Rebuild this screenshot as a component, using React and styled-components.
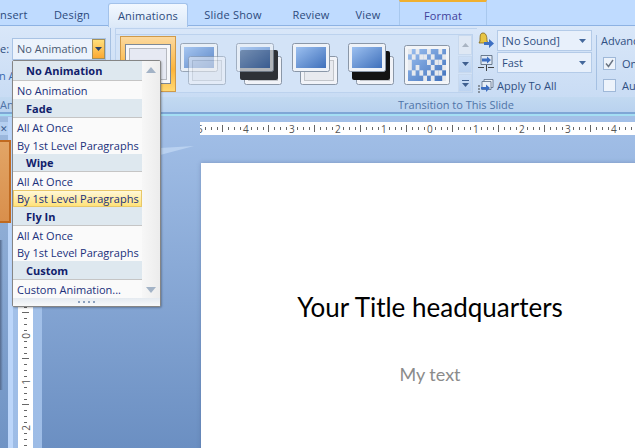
import React from "react";
import styled, { createGlobalStyle } from "styled-components";

const Global = createGlobalStyle`
  html, body { margin: 0; padding: 0; }
  body { width: 635px; height: 448px; overflow: hidden; font-family: "Open Sans", "Liberation Sans", sans-serif; }
  * { box-sizing: border-box; }
`;

const tabs = [
  { label: "nsert", w: 36, clip: true },
  { label: "Design", w: 72 },
  { label: "Animations", w: 80, active: true },
  { label: "Slide Show", w: 90 },
  { label: "Review", w: 66 },
  { label: "View", w: 48 },
  { label: "Format", w: 88, context: true },
];

// row heights read off the reference, they are not quite even
const menu = [
  { head: "No Animation", h: 20 },
  { item: "No Animation", h: 18 },
  { head: "Fade", h: 19 },
  { item: "All At Once", h: 18 },
  { item: "By 1st Level Paragraphs", h: 18 },
  { head: "Wipe", h: 18 },
  { item: "All At Once", h: 18 },
  { item: "By 1st Level Paragraphs", h: 17, hot: true },
  { head: "Fly In", h: 19 },
  { item: "All At Once", h: 18 },
  { item: "By 1st Level Paragraphs", h: 17 },
  { head: "Custom", h: 19 },
  { item: "Custom Animation...", h: 18 },
];

const hNums = ["5", "4", "3", "2", "1", "0", "1", "2", "3", "4"];
const vNums = ["1", "0", "1", "2"];

const checker = [
  [0, 0], [2, 0], [5, 0], [8, 0],
  [1, 1], [3, 1], [4, 1], [6, 1], [9, 1],
  [0, 2], [5, 2], [7, 2], [8, 2],
  [0, 3], [2, 3], [6, 3], [9, 3],
  [1, 4], [3, 4], [5, 4], [7, 4], [8, 4],
  [4, 5], [6, 5], [9, 5],
];

const Grad = () => (
  <defs>
    <linearGradient id="screen" x1="0" y1="0" x2="1" y2="1">
      <stop offset="0" stopColor="#9cc0f0" />
      <stop offset="1" stopColor="#3f70bb" />
    </linearGradient>
  </defs>
);

const Back = () => (
  <>
    <rect x="8.500" y="13.500" width="37" height="28" rx="2" fill="#f1f3f8" stroke="#8a97a8" />
    <rect x="12.500" y="17.500" width="29" height="20" fill="#e8eaef" stroke="#c2c5ca" />
  </>
);

const Front = ({ alpha = 1 }) => (
  <g opacity={alpha}>
    <rect x="0.500" y="0.500" width="37" height="28" rx="2" fill="#eef2f8" stroke="#8a97a8" />
    <rect x="4" y="4" width="30" height="21" fill="url(#screen)" />
  </g>
);

const Thumb = ({ kind }) => {
  if (kind === "checker") {
    return (
      <svg width="46" height="40" viewBox="0 0 46 40">
        <Grad />
        <rect x="0.500" y="0.500" width="45" height="39" rx="2" fill="#f3f5f8" stroke="#8a97a8" />
        <rect x="4" y="4" width="38" height="32" fill="url(#screen)" />
        {checker.map(([x, y]) => (
          <rect key={x + "-" + y} x={4 + x * 3.8} y={4 + y * 5.33} width="3.800" height="5.330" fill="#e6e9ee" />
        ))}
      </svg>
    );
  }
  return (
    <svg width="46" height="42" viewBox="0 0 46 42">
      <Grad />
      {kind === "fade" ? (
        <>
          <Front alpha={0.8} />
          <g opacity="0.55"><Back /></g>
        </>
      ) : (
        <>
          <Back />
          {kind === "dark" && <rect x="4" y="7" width="38" height="30" rx="2" fill="#2e3136" />}
          {kind === "black" && <rect x="4" y="8" width="38" height="29" rx="2" fill="#131313" />}
          <Front alpha={kind === "dark" ? 0.68 : 1} />
        </>
      )}
    </svg>
  );
};

const Ticks = ({ num, vertical }) => {
  const Slot = vertical ? VSlot : HSlot;
  return [0, 1, 2, 3, 4, 5, 6, 7].map((i) => (
    <Slot key={i}>
      {i === 0 ? (vertical ? <VNum>{num}</VNum> : num) : i === 4 ? <Tick $long $vertical={vertical} /> : <Tick $vertical={vertical} />}
    </Slot>
  ));
};

const Down = ({ fill = "#44689c" }) => (
  <svg width="7" height="4" viewBox="0 0 7 4"><path d="M0 0h7L3.500 4z" fill={fill} /></svg>
);

export default function App() {
  return (
    <Page>
      <Global />
      <TabBar>
        {tabs.map((t) => (
          <Tab key={t.label} $w={t.w} $active={t.active} $context={t.context} $clip={t.clip}>
            {t.label}
          </Tab>
        ))}
      </TabBar>

      <Ribbon>
        <LeftGroup>
          <LeftRow>
            <LabelText>e:</LabelText>
            <Combo>
              <ComboText>No Animation</ComboText>
              <ComboArrow><Down fill="#27426b" /></ComboArrow>
            </Combo>
          </LeftRow>
          <LeftNote>n A</LeftNote>
        </LeftGroup>

        <GalleryGroup>
          <Gallery>
            <ThumbRow>
              <SelectedThumb>
                <SelectedInner />
              </SelectedThumb>
              {["fade", "dark", "blue", "black", "checker"].map((k) => (
                <ThumbSlot key={k} $low={k === "checker"}>
                  <Thumb kind={k} />
                </ThumbSlot>
              ))}
            </ThumbRow>
            <ScrollCol>
              <ScrollBtn $h={20}><svg width="7" height="4" viewBox="0 0 7 4"><path d="M0 4h7L3.500 0z" fill="#a9b4c2" /></svg></ScrollBtn>
              <ScrollBtn $h={18} $blue><Down fill="#3f5f8f" /></ScrollBtn>
              <ScrollBtn $h={18} $blue><svg width="7" height="7" viewBox="0 0 7 7"><path d="M0 0h7v1H0zM0 3h7L3.500 7z" fill="#3f5f8f" /></svg></ScrollBtn>
            </ScrollCol>
          </Gallery>
        </GalleryGroup>

        <SoundCol>
          <SoundRow>
            <svg width="16" height="17" viewBox="0 0 16 17">
              <path d="M5 1c3 0 4 3 4 8l1 2H1l1-2c0-5 0-8 3-8z" fill="#e8c544" stroke="#7d6216" strokeWidth=".8" />
              <path d="M6 10h5V7l5 4.500L11 16v-3H6z" fill="#3d6fc2" />
            </svg>
            <Select>
              <span>[No Sound]</span>
              <Down />
            </Select>
          </SoundRow>
          <SoundRow>
            <svg width="16" height="16" viewBox="0 0 16 16">
              <path d="M3 .500h11v9H3z" fill="#dfe9f6" stroke="#4f5f75" strokeWidth=".8" />
              <path d="M4 3.500h5V1.500l4 3.500-4 3.500V6.500H4z" fill="#3d6fc2" />
              <path d="M0 12.500h6M10 12.500h6M8.500 10v6" stroke="#333" strokeWidth=".9" />
            </svg>
            <Select>
              <span>Fast</span>
              <Down />
            </Select>
          </SoundRow>
          <ApplyRow>
            <svg width="16" height="14" viewBox="0 0 16 14">
              <path d="M6 .500h9v8H6z" fill="#e8eff8" stroke="#5b6d85" strokeWidth=".8" />
              <path d="M4 2.500h9v8H4z" fill="#e8eff8" stroke="#5b6d85" strokeWidth=".8" />
              <path d="M3 8h5V5.500l4 3.500-4 4v-2.500H3z" fill="#3d6fc2" />
              <path d="M0 7h2M0 10h2M0 13h2" stroke="#333" strokeWidth=".9" />
            </svg>
            <span>Apply To All</span>
          </ApplyRow>
        </SoundCol>

        <Divider />

        <AdvanceCol>
          <AdvanceTitle>Advance</AdvanceTitle>
          <CheckRow>
            <CheckBox>
              <svg width="9" height="9" viewBox="0 0 9 9"><path d="M1 4.500l2.500 3L8 1" fill="none" stroke="#6a7482" strokeWidth="1.400" /></svg>
            </CheckBox>
            <span>On</span>
          </CheckRow>
          <CheckRow>
            <CheckBox />
            <span>Au</span>
          </CheckRow>
        </AdvanceCol>
      </Ribbon>

      <GroupBar>
        <GroupLabelLeft>Ani</GroupLabelLeft>
        <GroupLabel>Transition to This Slide</GroupLabel>
      </GroupBar>
      <RibbonEdge />

      <Workspace>
        <SidePanel>
          <SideTab>✕</SideTab>
          <SideThumb />
          <SideDark />
        </SidePanel>
        <SideGutter />
        <VRulerWrap>
          <VRuler>
            {vNums.map((n, i) => (
              <VRulerCell key={i}><Ticks num={n} vertical /></VRulerCell>
            ))}
          </VRuler>
        </VRulerWrap>
        <Canvas>
          <Wedge width="34" height="10" viewBox="0 0 34 10"><path d="M0 2L34 0 0 9z" fill="#b9d1f0" /></Wedge>
          <HRuler>
            <HRow>
              {hNums.map((n, i) => (
                <HCell key={i}><Ticks num={n} /></HCell>
              ))}
            </HRow>
          </HRuler>
          <Slide>
            <SlideTitle>Your Title headquarters</SlideTitle>
            <SlideText>My text</SlideText>
          </Slide>
        </Canvas>
      </Workspace>

      <Dropdown>
        <ListArea>
          <List>
            {menu.map((m, i) =>
              m.head ? (
                <MenuHead key={i} $h={m.h}>{m.head}</MenuHead>
              ) : (
                <MenuItem key={i} $h={m.h} $hot={m.hot}>{m.item}</MenuItem>
              )
            )}
          </List>
          <MenuScroll>
            <svg width="10" height="6" viewBox="0 0 10 6"><path d="M0 6h10L5 0z" fill="#a3b3c6" /></svg>
            <svg width="10" height="6" viewBox="0 0 10 6"><path d="M0 0h10L5 6z" fill="#a3b3c6" /></svg>
          </MenuScroll>
        </ListArea>
        <Grip>
          <GripDot /><GripDot /><GripDot /><GripDot />
        </Grip>
      </Dropdown>
    </Page>
  );
}

const Page = styled.div`
  position: relative;
  width: 635px;
  height: 448px;
  overflow: hidden;
  display: flex;
  flex-direction: column;
  background: #8aa9d4;
  font-size: 11px;
  color: #15428b;
`;

const TabBar = styled.div`
  height: 26px;
  flex: none;
  display: flex;
  background: #bfdbff;
  border-bottom: 1px solid #8db2e3;
`;

const Tab = styled.div`
  width: ${(p) => p.$w}px;
  flex: none;
  display: flex;
  align-items: center;
  justify-content: ${(p) => (p.$clip ? "flex-start" : "center")};
  padding-top: 4px;
  font-size: 11px;
  letter-spacing: 0.2px;
  color: #2c4a7c;
  ${(p) =>
    p.$active &&
    `
    margin-top: 3px;
    height: 24px;
    padding-top: 0;
    background: linear-gradient(#f2f8ff, #dce9f8);
    border: 1px solid #a3c2ea;
    border-bottom: none;
    border-radius: 3px 3px 0 0;
    z-index: 1;
  `}
  ${(p) =>
    p.$context &&
    `
    margin-left: 7px;
    border-top: 2px solid #f0b030;
    border-left: 1px solid #a8c8ee;
    border-right: 1px solid #a8c8ee;
    color: #3f3f9a;
  `}
`;

const Ribbon = styled.div`
  height: 71px;
  flex: none;
  display: flex;
  background: linear-gradient(#d9e7f9, #c9dcf4);
`;

const LeftGroup = styled.div`
  width: 111px;
  flex: none;
  padding-top: 10px;
  margin-top: 2px;
  border-right: 1px solid #a5c0e2;
  display: flex;
  flex-direction: column;
  gap: 8px;
  overflow: hidden;
`;

const LeftRow = styled.div`
  display: flex;
`;

const LeftNote = styled.div`
  color: #3a6ab0;
  white-space: nowrap;
  margin-left: -1px;
`;

const LabelText = styled.span`
  width: 12px;
  flex: none;
  line-height: 21px;
  color: #2c4a7c;
`;

const Combo = styled.div`
  width: 94px;
  height: 22px;
  display: flex;
  background: #ecf3fc;
  border: 1px solid #a9c3e4;
`;

const ComboText = styled.span`
  flex: 1;
  line-height: 19px;
  padding-left: 4px;
  color: #4a5a72;
  white-space: nowrap;
`;

const ComboArrow = styled.span`
  width: 13px;
  flex: none;
  display: flex;
  align-items: center;
  justify-content: center;
  background: linear-gradient(#ffdf7a, #fba933);
  border: 1px solid #a49059;
`;

const GalleryGroup = styled.div`
  width: 362px;
  flex: none;
  margin: 2px 0 0 4px;
  padding-top: 5px;
  border-top: 1px solid #bcd2ee;
  border-left: 1px solid #bcd2ee;
`;

const Gallery = styled.div`
  width: 357px;
  height: 59px;
  display: flex;
  justify-content: space-between;
  background: #d3e3f7;
  border: 1px solid #bcd2ee;
  border-left: none;
`;

const ThumbRow = styled.div`
  display: flex;
  align-items: flex-start;
  gap: 10px;
  padding: 1px 0 0 4px;
`;

const SelectedThumb = styled.div`
  width: 56px;
  height: 56px;
  margin-right: -6px;
  padding: 7px 4px 0;
  background: linear-gradient(#fbd9a0, #fdb53a 60%, #ffd873);
  border: 1px solid #cf9a4a;
`;

const SelectedInner = styled.div`
  width: 46px;
  height: 40px;
  background: #e6e9f3;
  border: 1px solid #7c8896;
  box-shadow: inset 0 0 0 3px #f6f7fa, inset 0 0 0 4px #b6b9c0;
`;

const ThumbSlot = styled.div`
  padding-top: ${(p) => (p.$low ? 9 : 7)}px;
  width: 46px;
`;

const ScrollCol = styled.div`
  width: 14px;
  flex: none;
  display: flex;
  flex-direction: column;
  gap: 1px;
`;

const ScrollBtn = styled.div`
  height: ${(p) => p.$h}px;
  display: flex;
  align-items: center;
  justify-content: center;
  border: 1px solid #c8d9ee;
  background: ${(p) => (p.$blue ? "linear-gradient(#cddff6, #bcd3f1)" : "#dfe8f4")};
`;

const SoundCol = styled.div`
  width: 120px;
  flex: none;
  margin-left: -1px;
  padding: 4px 0 0 2px;
  display: flex;
  flex-direction: column;
  gap: 1px;
`;

const SoundRow = styled.div`
  height: 21px;
  display: flex;
  align-items: center;
  gap: 3px;
`;

const Select = styled.div`
  width: 95px;
  height: 21px;
  display: flex;
  align-items: center;
  justify-content: space-between;
  padding: 0 5px 0 4px;
  background: #e8f0fb;
  border: 1px solid #b4cbe8;
  color: #2f4f82;
`;

const ApplyRow = styled.div`
  height: 21px;
  display: flex;
  align-items: center;
  gap: 3px;
  margin-top: 1px;
  color: #2f4f82;
  white-space: nowrap;
`;

const Divider = styled.div`
  width: 1px;
  height: 55px;
  margin-top: 9px;
  background: #a5c0e2;
  flex: none;
`;

const AdvanceCol = styled.div`
  flex: none;
  padding: 7px 0 0 4px;
  display: flex;
  flex-direction: column;
  gap: 8px;
  white-space: nowrap;
  color: #2f4f82;
`;

const AdvanceTitle = styled.div`
  height: 15px;
`;

const CheckRow = styled.div`
  display: flex;
  align-items: center;
  gap: 6px;
  height: 14px;
  margin-left: 2px;
`;

const CheckBox = styled.span`
  width: 13px;
  height: 13px;
  display: flex;
  align-items: center;
  justify-content: center;
  background: #edf3fb;
  border: 1px solid #9fb8d8;
`;

const GroupBar = styled.div`
  height: 15px;
  flex: none;
  display: flex;
  align-items: center;
  background: linear-gradient(#c2d9f1, #b9d2ef);
  color: #4f74a8;
`;

const GroupLabelLeft = styled.span`
  width: 398px;
  flex: none;
`;

const GroupLabel = styled.span`
  white-space: nowrap;
`;

const RibbonEdge = styled.div`
  height: 5px;
  flex: none;
  background: linear-gradient(#7fa6d6 0 2px, #a4def3 2px 4px, #a3c0e6 4px);
`;

const Workspace = styled.div`
  flex: 1;
  display: flex;
  min-height: 0;
`;

const SidePanel = styled.div`
  width: 8px;
  flex: none;
  display: flex;
  flex-direction: column;
  padding-top: 5px;
  background: linear-gradient(#9db9de, #6f93c4);
`;

const SideTab = styled.div`
  height: 13px;
  margin-bottom: 5px;
  font-size: 9px;
  line-height: 13px;
  color: #3a5c8e;
  background: #b5cff0;
  overflow: hidden;
`;

const SideThumb = styled.div`
  height: 83px;
  width: 11px;
  position: relative;
  z-index: 1;
  background: linear-gradient(#e2a566, #d98f4c);
  border: 2px solid #c06a20;
  border-left: none;
`;

const SideDark = styled.div`
  flex: 1;
  margin: 17px 5px 58px 0;
  background: linear-gradient(90deg, #566b8d, rgba(86, 107, 141, 0));
`;

const SideGutter = styled.div`
  width: 5px;
  flex: none;
  background: #bcd6fa;
`;

const VRulerWrap = styled.div`
  width: 29px;
  flex: none;
  padding-left: 5px;
  background: linear-gradient(#a9c6ec, #9dbce6);
`;

const VRuler = styled.div`
  width: 15px;
  height: 100%;
  background: #fff;
  display: flex;
  flex-direction: column;
  justify-content: flex-end;
  overflow: hidden;
`;

const VRulerCell = styled.div`
  height: 46px;
  flex: none;
  position: relative;
  top: 23px;
  display: flex;
  flex-direction: column;
`;

const VSlot = styled.div`
  height: 5.750px;
  display: flex;
  align-items: center;
  justify-content: center;
`;

const VNum = styled.span`
  transform: rotate(-90deg);
  font-size: 10px;
  color: #555;
`;

const Tick = styled.span`
  background: #666;
  flex: none;
  width: ${(p) => (p.$vertical ? (p.$long ? 7 : 3) : 1)}px;
  height: ${(p) => (p.$vertical ? 1 : p.$long ? 7 : 3)}px;
`;

const Canvas = styled.div`
  position: relative;
  flex: 1;
  min-width: 0;
  padding: 5px 0 0 158px;
  overflow: hidden;
  background: linear-gradient(#a3c0e8, #6b8fc2);
`;

const Wedge = styled.svg`
  position: absolute;
  left: 118px;
  top: 29px;
`;

const HRuler = styled.div`
  height: 13px;
  background: #fff;
  overflow: hidden;
`;

const HRow = styled.div`
  height: 13px;
  margin-left: -3px;
  display: flex;
`;

const HCell = styled.div`
  width: 46px;
  flex: none;
  display: flex;
`;

const HSlot = styled.div`
  width: 5.750px;
  flex: none;
  display: flex;
  align-items: center;
  justify-content: center;
  font-size: 10px;
  color: #555;
`;

const Slide = styled.div`
  margin: 28px 0 0 1px;
  width: 458px;
  height: 320px;
  background: #fff;
  display: flex;
  flex-direction: column;
  align-items: center;
  padding-top: 128px;
  box-shadow: 0 0 4px rgba(60, 80, 120, 0.35);
`;

const SlideTitle = styled.div`
  font-family: "Lato", sans-serif;
  font-size: 26px;
  line-height: 32px;
  color: #000;
  white-space: nowrap;
`;

const SlideText = styled.div`
  margin-top: 39px;
  font-family: "Lato", sans-serif;
  font-size: 18px;
  line-height: 24px;
  color: #8b8b8b;
`;

const Dropdown = styled.div`
  position: absolute;
  left: 12px;
  top: 60px;
  width: 149px;
  height: 247px;
  display: flex;
  flex-direction: column;
  background: #fafafa;
  border: 1px solid #858585;
  border-radius: 2px;
  box-shadow: 1px 1px 2px rgba(0, 0, 0, 0.25);
  z-index: 2;
`;

const ListArea = styled.div`
  flex: 1;
  display: flex;
  min-height: 0;
`;

const List = styled.div`
  width: 129px;
  flex: none;
`;

const MenuHead = styled.div`
  height: ${(p) => p.$h}px;
  padding-left: 13px;
  display: flex;
  align-items: center;
  font-weight: bold;
  font-size: 11px;
  color: #10206b;
  background: #dee8ef;
  border-bottom: 1px solid #c5c5c5;
`;

const MenuItem = styled.div`
  height: ${(p) => p.$h}px;
  padding-left: 4px;
  display: flex;
  align-items: center;
  font-size: 11px;
  white-space: nowrap;
  color: #20307a;
  ${(p) =>
    p.$hot &&
    `
    background: linear-gradient(#fff8d8, #ffe27a);
    border: 1px solid #e8c868;
    padding-left: 3px;
  `}
`;

const MenuScroll = styled.div`
  flex: 1;
  display: flex;
  flex-direction: column;
  align-items: center;
  justify-content: space-between;
  padding: 6px 0 5px;
  background: linear-gradient(90deg, #f7f7f7, #ececec);
`;

const Grip = styled.div`
  height: 8px;
  flex: none;
  display: flex;
  align-items: center;
  justify-content: center;
  gap: 3px;
  background: linear-gradient(#e4eaf0, #f8f9fa);
`;

const GripDot = styled.span`
  width: 2px;
  height: 2px;
  background: #8ba0bd;
`;
